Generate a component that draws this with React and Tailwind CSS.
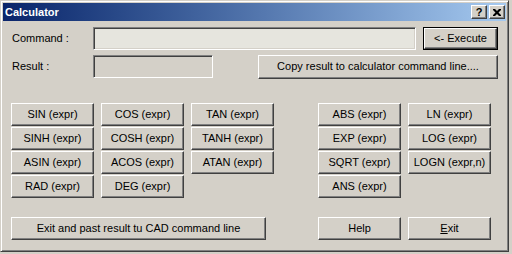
import React from "react";

const raised =
  "border border-t-white border-l-white border-r-[#404040] border-b-[#404040] shadow-[inset_-1px_-1px_#808080] bg-[#d4d0c8]";

function Btn({ children, className = "" }) {
  return (
    <div
      className={`${raised} flex items-center justify-center text-[11px] text-black leading-none ${className}`}
    >
      {children}
    </div>
  );
}

function Field({ className = "" }) {
  return (
    <div
      className={`border border-t-[#808080] border-l-[#808080] border-r-white border-b-white shadow-[inset_1px_1px_#404040,inset_-1px_-1px_#d4d0c8] ${className}`}
    />
  );
}

const fnLeft = [
  ["SIN (expr)", "COS (expr)", "TAN (expr)"],
  ["SINH (expr)", "COSH (expr)", "TANH (expr)"],
  ["ASIN (expr)", "ACOS (expr)", "ATAN (expr)"],
  ["RAD (expr)", "DEG (expr)", null],
];
const fnRight = [
  ["ABS (expr)", "LN (expr)"],
  ["EXP (expr)", "LOG (expr)"],
  ["SQRT (expr)", "LOGN (expr,n)"],
  ["ANS (expr)", null],
];

export default function App() {
  return (
    <div
      className="w-[512px] h-[254px] bg-[#d4d0c8] overflow-hidden"
      style={{ fontFamily: '"Liberation Sans", Arial, sans-serif' }}
    >
      <div className="w-[509px] h-[252px] border border-t-[#d4d0c8] border-l-[#d4d0c8] border-r-[#404040] border-b-[#404040] shadow-[inset_1px_1px_#fff,inset_-1px_-1px_#808080] p-[2px] flex flex-col">
        {/* Title bar */}
        <div className="h-[18px] shrink-0 bg-gradient-to-r from-[#0a246a] to-[#a6caf0] flex items-center pl-[2px] pr-[1px]">
          <span className="text-white font-bold text-[11px] leading-none">Calculator</span>
          <div className="ml-auto flex gap-[2px]">
            <div className={`${raised} w-[16px] h-[14px] flex items-center justify-center text-[11px] font-bold leading-none text-black`}>
              ?
            </div>
            <div className={`${raised} w-[16px] h-[14px] flex items-center justify-center`}>
              <svg width="8" height="7" viewBox="0 0 8 7">
                <path d="M0 0h2l2 2 2-2h2v1L5.5 3.5 8 6v1H6L4 5 2 7H0V6l2.5-2.5L0 1z" fill="#000" />
              </svg>
            </div>
          </div>
        </div>

        {/* Body */}
        <div className="pl-[8px] pt-[6px] flex flex-col">
          <div className="flex items-center h-[23px]">
            <div className="w-[82px] text-[11px] pl-[1px]">Command :</div>
            <Field className="w-[323px] h-[23px] bg-[#e6e5de]" />
            <div className="ml-[7px] w-[75px] h-[23px] border border-black">
              <Btn className="w-full h-full">&lt;- Execute</Btn>
            </div>
          </div>
          <div className="flex items-center h-[23px] mt-[5px]">
            <div className="w-[82px] text-[11px] pl-[1px]">Result :</div>
            <Field className="w-[120px] h-[23px] bg-[#d4d0c8]" />
            <Btn className="ml-[45px] w-[240px] h-[24px]">Copy result to calculator command line....</Btn>
          </div>

          <div className="flex mt-[25px]">
            <div className="grid grid-cols-[83px_83px_83px] gap-x-[7px] gap-y-[1px]">
              {fnLeft.flat().map((t, i) =>
                t ? (
                  <Btn key={i} className="h-[23px]">{t}</Btn>
                ) : (
                  <div key={i} />
                )
              )}
            </div>
            <div className="ml-[44px] grid grid-cols-[83px_83px] gap-x-[7px] gap-y-[1px]">
              {fnRight.flat().map((t, i) =>
                t ? (
                  <Btn key={i} className="h-[23px]">{t}</Btn>
                ) : (
                  <div key={i} />
                )
              )}
            </div>
          </div>

          <div className="flex mt-[19px]">
            <Btn className="w-[255px] h-[23px]">Exit and past result tu CAD command line</Btn>
            <Btn className="ml-[52px] w-[83px] h-[23px]">Help</Btn>
            <Btn className="ml-[7px] w-[83px] h-[23px]">
              <span>
                <span className="underline">E</span>xit
              </span>
            </Btn>
          </div>
        </div>
      </div>
    </div>
  );
}
